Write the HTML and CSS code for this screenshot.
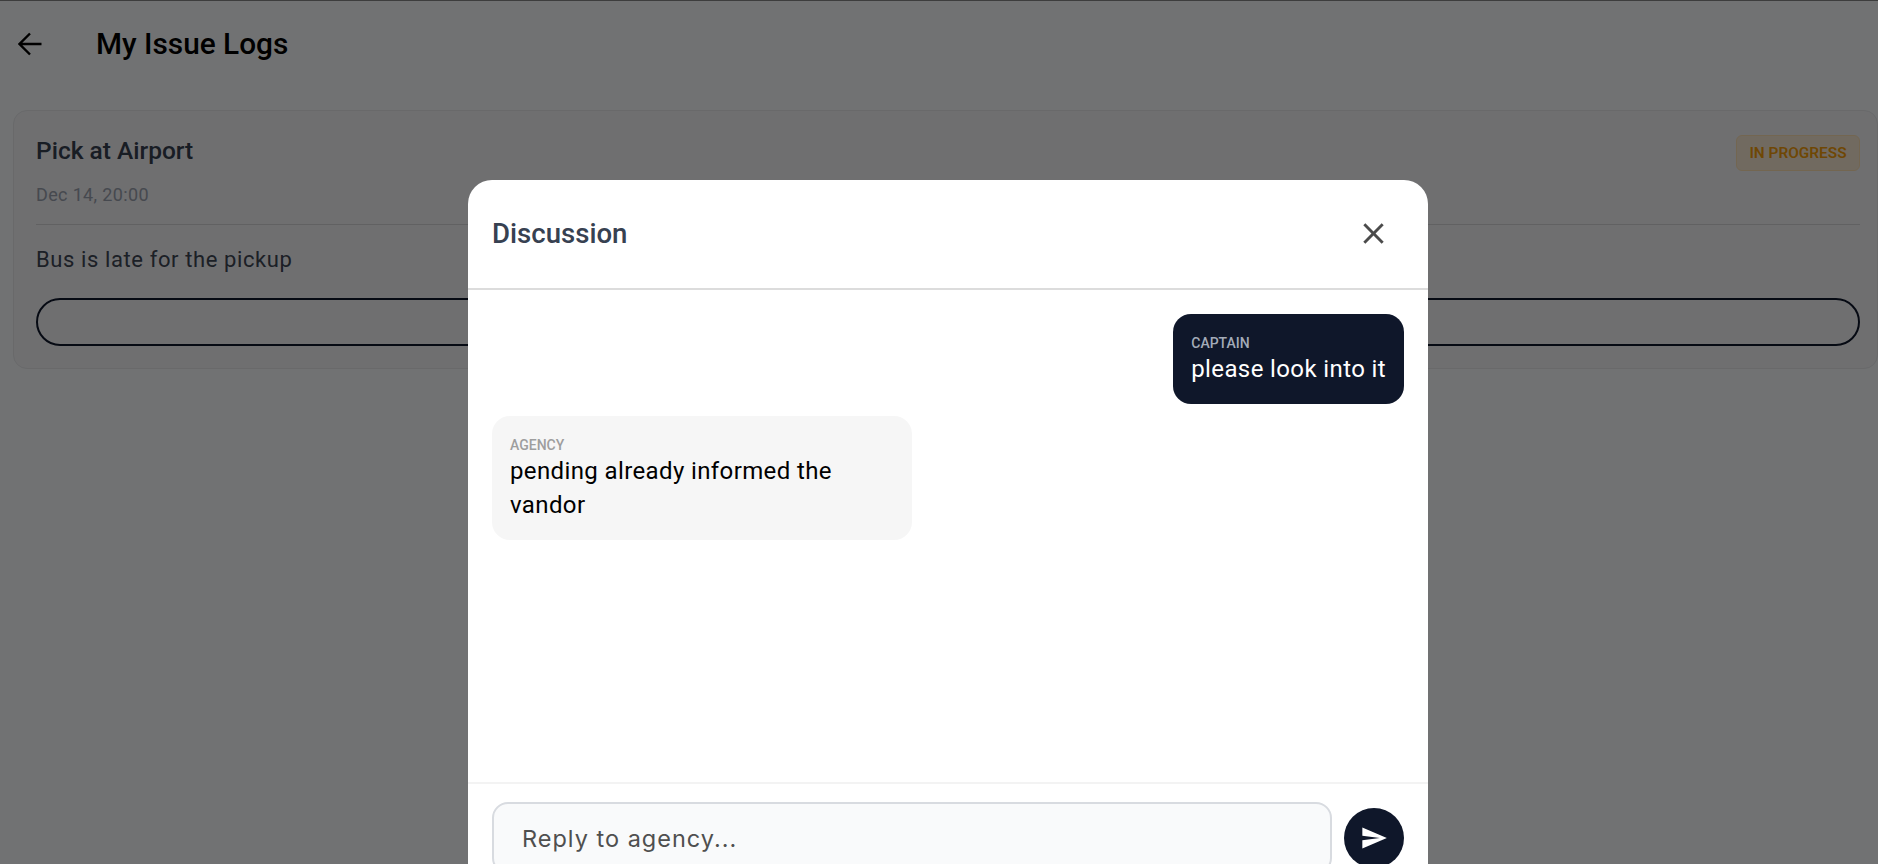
FILE: index.html
```html
<!DOCTYPE html>
<html lang="en">
<head>
    <meta charset="UTF-8">
    <meta name="viewport" content="width=device-width, initial-scale=1.0">
    <title>My Issue Logs</title>
    <link rel="stylesheet" href="styles.css">
</head>
<body>
    <div class="page">
        <div class="app-bar">
            <svg class="back-icon" width="24" height="24" viewBox="0 0 24 24">
                <path d="M23.5 12H1.5M12 1.5L1.5 12L12 22.5" fill="none" stroke="#000" stroke-width="2.4"/>
            </svg>
            <div class="app-title">My Issue Logs</div>
        </div>
        <div class="issue-card">
            <div class="issue-top">
                <div>
                    <div class="issue-title">Pick at Airport</div>
                    <div class="issue-date">Dec 14, 20:00</div>
                </div>
                <div class="status-badge">IN PROGRESS</div>
            </div>
            <div class="issue-text">Bus is late for the pickup</div>
            <div class="outline-btn"></div>
        </div>
    </div>
    <div class="overlay">
        <div class="modal">
            <div class="modal-head">
                <div class="modal-title">Discussion</div>
                <svg class="close-icon" width="35" height="35" viewBox="0 0 24 24">
                    <path fill="#4b4b4b" d="M19 6.41L17.59 5 12 10.59 6.41 5 5 6.41 10.59 12 5 17.59 6.41 19 12 13.41 17.59 19 19 17.59 13.41 12z"/>
                </svg>
            </div>
            <div class="messages">
                <div class="bubble bubble-me">
                    <div class="bubble-label">CAPTAIN</div>
                    <div class="bubble-text">please look into it</div>
                </div>
                <div class="bubble bubble-other">
                    <div class="bubble-label">AGENCY</div>
                    <div class="bubble-text">pending already informed the vandor</div>
                </div>
            </div>
            <div class="reply-bar">
                <div class="reply-input">Reply to agency...</div>
                <div class="send-btn">
                    <svg width="28" height="28" viewBox="0 0 24 24">
                        <path fill="#fff" d="M2.01 21L23 12 2.01 3 2 10l15 2-15 2z"/>
                    </svg>
                </div>
            </div>
        </div>
    </div>
</body>
</html>
```

FILE: styles.css
```css
* {
    margin: 0; padding: 0; box-sizing: border-box;
}
html, body {
    height: 100%; overflow: hidden;
}
body {
    background: #fbfdfe; font-family: Roboto, "Noto Sans", sans-serif;
}
.page {
    height: 100%; border-top: 1px solid #888;
}
.app-bar {
    display: flex; align-items: center; height: 85px; padding-left: 18px;
}
.back-icon {
    flex: none;
}
.app-title {
    margin-left: 54px; font-size: 29.8px; font-weight: 500; color: #000;
}
.issue-card {
    margin: 24px 0 0 13px; height: 259px; padding: 24px 17px 0 22px;
    background: #f5f5f9; border: 1px solid #e8e9ec; border-radius: 14px;
}
.issue-top {
    display: flex; justify-content: space-between; align-items: flex-start;
    height: 90px; border-bottom: 1px solid #d8d8da;
}
.issue-title {
    font-size: 24.5px; font-weight: 500; line-height: 32px; color: #374151;
}
.issue-date {
    margin-top: 17px; font-size: 18px; line-height: 22px; letter-spacing: 0.35px; color: #9ca3af;
}
.status-badge {
    width: 124px; height: 36px; line-height: 34px; text-align: center;
    font-size: 15.4px; font-weight: 600; color: #f59e0b;
    background: #faebd6; border: 1px solid #ffe2b4; border-radius: 6px;
}
.issue-text {
    margin-top: 21px; font-size: 22px; line-height: 28px; letter-spacing: 0.6px; color: #3f4754;
}
.outline-btn {
    margin-top: 24px; height: 48px; border: 2px solid #0f172a; border-radius: 24px;
}
.overlay {
    position: fixed; top: 0; left: 0; right: 0; bottom: 0;
    display: flex; justify-content: center; align-items: flex-start;
    padding: 180px 0 0 18px; background: rgba(0, 0, 0, 0.55);
}
.modal {
    width: 960px; height: 760px; flex: none; display: flex; flex-direction: column;
    background: #fff; border-radius: 24px 24px 0 0;
}
.modal-head {
    display: flex; justify-content: space-between; align-items: center;
    height: 110px; padding: 0 12px 2px 24px; border-bottom: 2px solid #dcdcdc;
}
.modal-title {
    font-size: 27.6px; font-weight: 500; color: #374151;
}
.close-icon {
    margin-right: 25px;
}
.messages {
    height: 492px; padding: 24px 24px 0; display: flex; flex-direction: column; gap: 12px;
}
.bubble {
    padding: 19px 18px 18px; border-radius: 18px;
}
.bubble-me {
    align-self: flex-end; background: #0f172a; color: #fff; height: 90px;
}
.bubble-other {
    align-self: flex-start; width: 420px; height: 124px; background: #f6f6f6; color: #000;
}
.bubble-label {
    font-size: 14px; line-height: 20px; font-weight: 500;
}
.bubble-me .bubble-label {
    color: #a3abb8;
}
.bubble-other .bubble-label {
    color: #9e9e9e;
}
.bubble-text {
    font-size: 24px; line-height: 33.5px; letter-spacing: 0.38px;
}
.reply-bar {
    display: flex; align-items: center; gap: 12px; padding: 18px 24px 0;
    border-top: 2px solid #f3f3f3;
}
.reply-input {
    flex: 1; height: 72px; line-height: 70px; padding-left: 28px;
    font-family: Inter, sans-serif; font-size: 23.5px; letter-spacing: 1px; color: #4f4f4f;
    background: #f9fafb; border: 2px solid #d8dbe0; border-radius: 16px;
}
.send-btn {
    width: 60px; height: 60px; flex: none; display: flex; align-items: center; justify-content: center;
    background: #0f172a; border-radius: 50%;
}
```
